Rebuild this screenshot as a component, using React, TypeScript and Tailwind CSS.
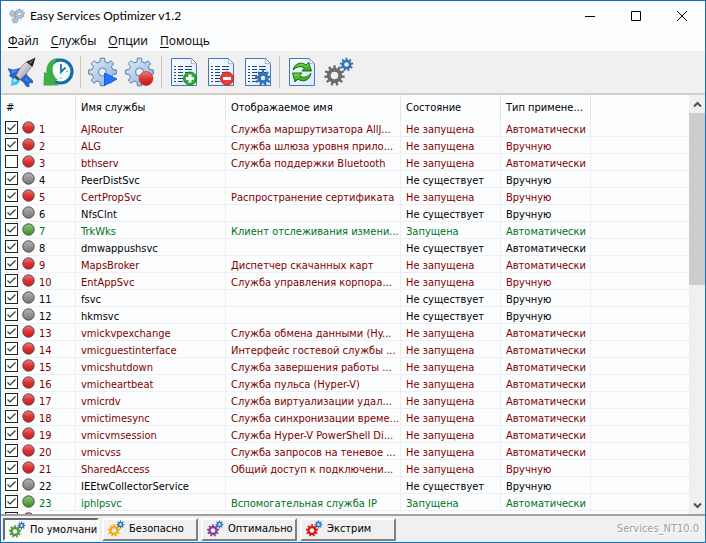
import { useState, type ReactNode } from "react";
import clsx from "clsx";

type Status = "stopped" | "missing" | "running";

interface Service {
  name: string;
  title: string;
  status: Status;
  auto: boolean;
  off?: boolean;
}

const SERVICES: Service[] = [
  { name: "AJRouter", title: "Служба маршрутизатора AllJ...", status: "stopped", auto: true },
  { name: "ALG", title: "Служба шлюза уровня прило...", status: "stopped", auto: false },
  { name: "bthserv", title: "Служба поддержки Bluetooth", status: "stopped", auto: true, off: true },
  { name: "PeerDistSvc", title: "", status: "missing", auto: false },
  { name: "CertPropSvc", title: "Распространение сертификата", status: "stopped", auto: false },
  { name: "NfsClnt", title: "", status: "missing", auto: false },
  { name: "TrkWks", title: "Клиент отслеживания измени...", status: "running", auto: true },
  { name: "dmwappushsvc", title: "", status: "missing", auto: true },
  { name: "MapsBroker", title: "Диспетчер скачанных карт", status: "stopped", auto: true },
  { name: "EntAppSvc", title: "Служба управления корпора...", status: "stopped", auto: false },
  { name: "fsvc", title: "", status: "missing", auto: false },
  { name: "hkmsvc", title: "", status: "missing", auto: false },
  { name: "vmickvpexchange", title: "Служба обмена данными (Hy...", status: "stopped", auto: true },
  { name: "vmicguestinterface", title: "Интерфейс гостевой службы ...", status: "stopped", auto: true },
  { name: "vmicshutdown", title: "Служба завершения работы ...", status: "stopped", auto: true },
  { name: "vmicheartbeat", title: "Служба пульса (Hyper-V)", status: "stopped", auto: true },
  { name: "vmicrdv", title: "Служба виртуализации удал...", status: "stopped", auto: true },
  { name: "vmictimesync", title: "Служба синхронизации време...", status: "stopped", auto: true },
  { name: "vmicvmsession", title: "Служба Hyper-V PowerShell Di...", status: "stopped", auto: true },
  { name: "vmicvss", title: "Служба запросов на теневое ...", status: "stopped", auto: true },
  { name: "SharedAccess", title: "Общий доступ к подключени...", status: "stopped", auto: false },
  { name: "IEEtwCollectorService", title: "", status: "missing", auto: false },
  { name: "iphlpsvc", title: "Вспомогательная служба IP", status: "running", auto: true },
  { name: "", title: "", status: "stopped", auto: false },
];

const STATUS = {
  stopped: { label: "Не запущена", text: "text-[#800000]", dot: "url(#dot-red)" },
  missing: { label: "Не существует", text: "text-black", dot: "url(#dot-gray)" },
  running: { label: "Запущена", text: "text-[#007318]", dot: "url(#dot-green)" },
};

/** Outline of a cog wheel, with a round hole cut by the even-odd rule. */
function gearPath(cx: number, cy: number, outer: number, root: number, hole: number, teeth: number) {
  const step = (Math.PI * 2) / teeth;
  const points: string[] = [];
  for (let i = 0; i < teeth; i++) {
    const a = i * step - Math.PI / 2;
    for (const [r, t] of [[root, -0.3], [outer, -0.19], [outer, 0.19], [root, 0.3]]) {
      points.push(`${(cx + r * Math.cos(a + t * step)).toFixed(2)} ${(cy + r * Math.sin(a + t * step)).toFixed(2)}`);
    }
  }
  return `M${points.join("L")}ZM${cx - hole} ${cy}a${hole} ${hole} 0 1 0 ${hole * 2} 0a${hole} ${hole} 0 1 0 ${-hole * 2} 0Z`;
}

function Defs() {
  return (
    <svg width="0" height="0" className="absolute" aria-hidden="true">
      <defs>
        <linearGradient id="dot-red" x2="0" y2="1">
          <stop offset="0" stopColor="#e88080" />
          <stop offset=".5" stopColor="#dc3535" />
          <stop offset="1" stopColor="#cc1616" />
        </linearGradient>
        <linearGradient id="dot-gray" x2="0" y2="1">
          <stop offset="0" stopColor="#b5b5b5" />
          <stop offset="1" stopColor="#757575" />
        </linearGradient>
        <linearGradient id="dot-green" x2="0" y2="1">
          <stop offset="0" stopColor="#8cc97c" />
          <stop offset="1" stopColor="#2f9420" />
        </linearGradient>
        <linearGradient id="steel" x2="1" y2="1">
          <stop offset="0" stopColor="#e3effb" />
          <stop offset="1" stopColor="#89add8" />
        </linearGradient>
        <linearGradient id="paper" x2="1" y2="1">
          <stop offset="0" stopColor="#fbfdff" />
          <stop offset="1" stopColor="#d9e9fb" />
        </linearGradient>
        <linearGradient id="hull" x2="1" y2="1">
          <stop offset="0" stopColor="#ffffff" />
          <stop offset="1" stopColor="#8d8d95" />
        </linearGradient>
        <linearGradient id="arrow" x2="0" y2="1">
          <stop offset="0" stopColor="#83d94a" />
          <stop offset="1" stopColor="#249b1c" />
        </linearGradient>
      </defs>
    </svg>
  );
}

function Glyph({ children }: { children: ReactNode }) {
  return (
    <svg width="32" height="32" viewBox="0 0 32 32" aria-hidden="true">
      {children}
    </svg>
  );
}

function RocketIcon() {
  return (
    <Glyph>
      <path d="M5 30 6 21.500l4-1.500L14 25l-3 3.500Z" fill="#35c5ee" />
      <path d="m7 26.500 1-4 3 2Z" fill="#b9f3ff" />
      <path d="m2 12.500 5 1.500 9-2-5 8.500-4 1.500L3.500 20l1-2.500Z" fill="#2464cf" stroke="#174c9e" strokeWidth=".6" />
      <path d="m19 14 2 5.500 5.500 5V27L23 26.500l0 4.500-3-1-2-3.500-4-3Z" fill="#2464cf" stroke="#174c9e" strokeWidth=".6" />
      <path d="m5 14.500 7-.5-6 4Zm15 6.500 3.500 5-4.500-2Z" fill="#4a8cf0" />
      <path d="M10 19.500C13 13 17 8 21.500 5L26 9.500c-3 5.500-7 10-12 14Z" fill="url(#hull)" stroke="#606068" strokeWidth=".6" />
      <path d="M20.500 6 29.500 1.500 26.500 11Z" fill="#1c1c1c" />
      <path d="m23 6.500 5-3-3.500 4.500Z" fill="#777" />
      <path d="m10 19.500 4 4-2 1-3-3Z" fill="#42424a" />
    </Glyph>
  );
}

function HistoryIcon() {
  return (
    <Glyph>
      <circle cx="17.500" cy="15.500" r="11.500" fill="#f7fcff" stroke="#156da3" strokeWidth="3.200" />
      <path d="M18 8v8l4.500-4.500" fill="none" stroke="#1a75ad" strokeWidth="1.800" />
      <path d="M25 15.500h-2M18 23v-2" stroke="#62b3dc" strokeWidth="1" />
      <path d="M16 2C8 2 2.500 8 3.500 17L1 16 .5 29.500H16L11.500 26l3-2.500C7.500 18 8 7 16 2Z" fill="#3eae49" />
    </Glyph>
  );
}

function BlueGear() {
  return (
    <path
      d={gearPath(15.5, 16, 14, 10.5, 4, 8)}
      fill="url(#steel)"
      fillRule="evenodd"
      stroke="#587fac"
      strokeWidth="1"
      strokeLinejoin="round"
    />
  );
}

function GearPlayIcon() {
  return (
    <Glyph>
      <BlueGear />
      <path d="M17.500 17v12.500L30 23Z" fill="#2473ff" stroke="#135bea" strokeWidth="1" />
    </Glyph>
  );
}

function GearRecordIcon() {
  return (
    <Glyph>
      <BlueGear />
      <circle cx="22" cy="22.500" r="7" fill="url(#dot-red)" stroke="#c92525" strokeWidth=".6" />
    </Glyph>
  );
}

function Page() {
  return (
    <>
      <path d="M3.500 2.500h20l5 5v22h-25Z" fill="url(#paper)" stroke="#4478b7" strokeWidth="1" />
      <path d="M23.500 2.500c.5 3-.5 5-.5 5 2 0 4 0 5.500 1" fill="#fff" stroke="#9ab3cd" strokeWidth="1" />
    </>
  );
}

function ListPage({ children }: { children: ReactNode }) {
  return (
    <Glyph>
      <Page />
      <path d="M6 10.500h2M6 13.500h2M6 16.500h2M6 19.500h2M6 22.500h2M6 25.500h2" stroke="#24447c" />
      <path d="M10 10.500h5M17 10.500h7M10 13.500h5M17 13.500h7M10 16.500h5M17 16.500h7M10 19.500h5M10 22.500h5M10 25.500h5" stroke="#24447c" />
      {children}
    </Glyph>
  );
}

function ListAddIcon() {
  return (
    <ListPage>
      <circle cx="22" cy="22.500" r="6.500" fill="#2eaf34" stroke="#11821b" strokeWidth="1" />
      <path d="M22 18.500v8M18 22.500h8" stroke="#fff" strokeWidth="3" />
    </ListPage>
  );
}

function ListRemoveIcon() {
  return (
    <ListPage>
      <circle cx="22" cy="22.500" r="6.500" fill="#e93c34" stroke="#c4221e" strokeWidth="1" />
      <path d="M18 22.500h8" stroke="#fff" strokeWidth="3" />
    </ListPage>
  );
}

function ListGearIcon() {
  return (
    <ListPage>
      <path d={gearPath(21, 22, 8, 5.6, 2.2, 9)} fill="#3474b5" fillRule="evenodd" />
    </ListPage>
  );
}

function RefreshIcon() {
  return (
    <Glyph>
      <Page />
      <path
        d="M7 14C8 8 15 5 20 9l2.500-2.500L25.500 15H16l2.500-3c-4-2.500-8-1-11.500 2Z"
        fill="url(#arrow)"
        stroke="#107313"
        strokeWidth="1"
      />
      <path
        d="M25 17.500C24 24 17 27 12 23l-3 3L6.500 17H16l-2.500 3c4 2.500 8 1 11.500-2.500Z"
        fill="url(#arrow)"
        stroke="#107313"
        strokeWidth="1"
      />
    </Glyph>
  );
}

function GearsIcon() {
  return (
    <Glyph>
      <path d={gearPath(11.5, 19.5, 10.3, 7.5, 3.8, 11)} fill="#6c6c6c" fillRule="evenodd" />
      <path d={gearPath(23.5, 8.5, 6.8, 4.9, 2.3, 9)} fill="#3474b5" fillRule="evenodd" />
    </Glyph>
  );
}

function ProfileIcon({ color }: { color: string }) {
  return (
    <svg width="18" height="18" viewBox="0 0 18 18" className="shrink-0" aria-hidden="true">
      <path d={gearPath(7, 10.5, 6.2, 4.6, 2.3, 9)} fill={color} fillRule="evenodd" />
      <path d={gearPath(13.5, 4.5, 4, 2.7, 1.2, 8)} fill="#3474b5" fillRule="evenodd" />
    </svg>
  );
}

const TOOLS = [
  [
    { label: "Оптимизировать", icon: <RocketIcon /> },
    { label: "Восстановить", icon: <HistoryIcon /> },
  ],
  [
    { label: "Запустить службу", icon: <GearPlayIcon /> },
    { label: "Остановить службу", icon: <GearRecordIcon /> },
  ],
  [
    { label: "Добавить", icon: <ListAddIcon /> },
    { label: "Удалить", icon: <ListRemoveIcon /> },
    { label: "Изменить", icon: <ListGearIcon /> },
  ],
  [
    { label: "Обновить", icon: <RefreshIcon /> },
    { label: "Службы Windows", icon: <GearsIcon /> },
  ],
];

const MENU = ["Файл", "Службы", "Опции", "Помощь"];

const PROFILES = [
  { label: "По умолчанию", color: "#4f9a3f" },
  { label: "Безопасно", color: "#f2ab15" },
  { label: "Оптимально", color: "#8b3f9c" },
  { label: "Экстрим", color: "#e31212" },
];

function TitleBar() {
  return (
    <header className="flex h-[30px] shrink-0 items-center pl-2 text-xs">
      <svg width="16" height="16" viewBox="0 0 16 16" aria-hidden="true">
        <path d={gearPath(10.5, 6, 5, 3.6, 1.8, 9)} fill="#b9cbe0" stroke="#6c84a4" strokeWidth=".6" fillRule="evenodd" />
        <path d={gearPath(3.5, 5.5, 3.2, 2.2, 1, 7)} fill="#c5d0de" stroke="#7c8ca2" strokeWidth=".6" fillRule="evenodd" />
        <path d={gearPath(6, 12, 3.2, 2.2, 1, 7)} fill="#c5d0de" stroke="#7c8ca2" strokeWidth=".6" fillRule="evenodd" />
      </svg>
      <h1 className="ml-[5px] flex-1 font-[Lato,'Open_Sans',sans-serif]">Easy Services Optimizer v1.2</h1>
      <button aria-label="Свернуть" className="flex h-full w-[46px] items-center justify-center">
        <svg width="10" height="10" viewBox="0 0 10 10" stroke="#000">
          <path d="M0 5.500h10" />
        </svg>
      </button>
      <button aria-label="Развернуть" className="flex h-full w-[46px] items-center justify-center">
        <svg width="10" height="10" viewBox="0 0 10 10" fill="none" stroke="#000">
          <path d="M.5.5h9v9h-9z" />
        </svg>
      </button>
      <button aria-label="Закрыть" className="flex h-full w-[46px] items-center justify-center">
        <svg width="10" height="10" viewBox="0 0 10 10" stroke="#000">
          <path d="m0 0 10 10M10 0 0 10" />
        </svg>
      </button>
    </header>
  );
}

function StatusDot({ status }: { status: Status }) {
  return (
    <svg width="13" height="13" viewBox="0 0 13 13" className="shrink-0" aria-hidden="true">
      <circle cx="6.500" cy="6.500" r="5.700" fill={STATUS[status].dot} stroke="#5e4a4a" strokeWidth="1" />
    </svg>
  );
}

const cell = "h-[17px] border-r border-b border-[#eeeff1] p-0 pt-[3px] pl-[5px] align-top";

function ServiceRow({ service, index }: { service: Service; index: number }) {
  return (
    <tr className={clsx("leading-[13px]", STATUS[service.status].text)}>
      <td className="h-[17px] border-r border-b border-[#eeeff1] p-0 pl-1 align-top">
        <label className="flex h-4 items-start gap-1 pt-px">
          <span className="relative flex">
            <input
              type="checkbox"
              defaultChecked={!service.off}
              className="peer size-[13px] appearance-none border border-[#222] bg-white"
            />
            <svg
              width="13"
              height="13"
              viewBox="0 0 13 13"
              className="pointer-events-none invisible absolute inset-0 peer-checked:visible"
              fill="none"
              stroke="#333"
              strokeWidth="1.200"
            >
              <path d="m2.500 6.500 2.500 2.500 5.500-5.500" />
            </svg>
          </span>
          <StatusDot status={service.status} />
          <span className="pt-0.5">{index + 1}</span>
        </label>
      </td>
      <td className={cell}>{service.name}</td>
      <td className={cell}>{service.title}</td>
      <td className={cell}>{STATUS[service.status].label}</td>
      <td className={cell}>{service.auto ? "Автоматически" : "Вручную"}</td>
      <td className="border-b border-[#eeeff1] p-0" />
    </tr>
  );
}

function ServiceTable() {
  const head = "border-r border-[#e4e5e7] pl-[5px] pt-0.5 text-left font-normal";
  return (
    <div className="min-w-0 flex-1 overflow-hidden">
      <table className="w-full table-fixed border-separate border-spacing-0 whitespace-nowrap">
        <colgroup>
          <col className="w-[75px]" />
          <col className="w-[150px]" />
          <col className="w-[175px]" />
          <col className="w-[100px]" />
          <col className="w-[90px]" />
          <col />
        </colgroup>
        <thead>
          <tr className="h-[25px] text-black">
            <th className={head}>#</th>
            <th className={head}>Имя службы</th>
            <th className={head}>Отображаемое имя</th>
            <th className={head}>Состояние</th>
            <th className={head}>Тип примене...</th>
            <th />
          </tr>
        </thead>
        <tbody>
          {SERVICES.map((s, i) => (
            <ServiceRow key={i} service={s} index={i} />
          ))}
        </tbody>
      </table>
    </div>
  );
}

function ScrollBar() {
  return (
    <div className="flex w-4 shrink-0 flex-col bg-[#f0f0f0]">
      <button aria-label="Прокрутить вверх" className="flex h-[18px] items-center justify-center">
        <svg width="9" height="7" viewBox="0 0 9 7" fill="none" stroke="#505050" strokeWidth="2">
          <path d="m1 5.500 3.500-3.500L8 5.500" />
        </svg>
      </button>
      <div className="flex-1">
        <div className="h-[45%] bg-[#cdcdcd]" />
      </div>
      <button aria-label="Прокрутить вниз" className="flex h-[18px] items-center justify-center">
        <svg width="9" height="7" viewBox="0 0 9 7" fill="none" stroke="#505050" strokeWidth="2">
          <path d="m1 1.500 3.500 3.500L8 1.500" />
        </svg>
      </button>
    </div>
  );
}

export default function App() {
  const [profile, setProfile] = useState(0);

  return (
    <div className="flex h-screen flex-col overflow-hidden border border-[#1a6fb3] bg-[#fcfdff] font-['DejaVu_Sans_Condensed','DejaVu_Sans',sans-serif] text-[11px] text-black">
      <Defs />
      <TitleBar />
      <nav className="flex h-5 shrink-0 items-center gap-3 pl-[7px] font-['Open_Sans','Noto_Sans',sans-serif] text-xs">
        {MENU.map((item) => (
          <button key={item}>
            <span className="underline underline-offset-2">{item[0]}</span>
            {item.slice(1)}
          </button>
        ))}
      </nav>

      <div className="flex h-11 shrink-0 items-center border-b-2 border-[#d2cfc4] bg-[#f0f0f0] pl-0.5">
        {TOOLS.map((group, i) => (
          <div key={i} className="flex items-center">
            {i > 0 && <div className="mx-[3px] h-8 w-px bg-[#c9c7ba]" />}
            {group.map((tool) => (
              <button key={tool.label} aria-label={tool.label} className="w-[37px] pl-[3px]">
                {tool.icon}
              </button>
            ))}
          </div>
        ))}
      </div>

      <main className="flex min-h-0 flex-1">
        <ServiceTable />
        <ScrollBar />
      </main>

      <footer className="flex h-7 shrink-0 items-center gap-[3px] border-t-2 border-[#a0a0a0] bg-[#f0f0f0] pl-0.5">
        {PROFILES.map((p, i) => (
          <button
            key={p.label}
            onClick={() => setProfile(i)}
            className={clsx(
              "flex h-[23px] w-24 items-center gap-1 overflow-hidden border-2 pl-[3px] whitespace-nowrap",
              profile === i
                ? "border-t-[#696969] border-r-white border-b-white border-l-[#696969] bg-[#f8f8f8] pt-0.5"
                : "border-t-white border-r-[#808080] border-b-[#808080] border-l-white",
            )}
          >
            <ProfileIcon color={p.color} />
            {p.label}
          </button>
        ))}
        <span className="ml-auto pr-1.5 text-[#a0a0a0] [text-shadow:1px_1px_0_#fff]">Services_NT10.0</span>
      </footer>
    </div>
  );
}
